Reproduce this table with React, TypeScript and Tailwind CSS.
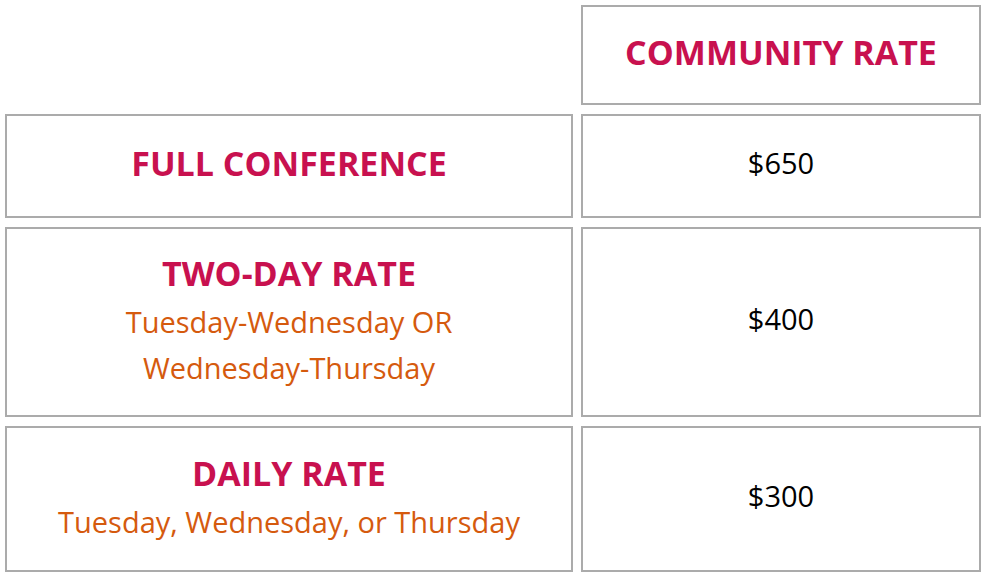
import React from "react";

const cell = "border-2 border-[#ababab] bg-white flex flex-col items-center justify-center text-center pb-[7px]";
const title = "font-bold text-[#c8114f] text-[34px] leading-[52px]";
const sub = "text-[#d55a0e] text-[29px] leading-[46px]";
const price = "text-black text-[29px] leading-[46px]";

export default function App() {
  return (
    <div
      className="w-[988px] h-[581px] bg-white p-[5px]"
      style={{ fontFamily: '"Open Sans", "Noto Sans", sans-serif' }}
    >
      <div className="grid grid-cols-[568px_400px] gap-x-[8px] gap-y-[9px]">
        <div className="h-[100px]" />
        <div className={`${cell} h-[100px]`}>
          <div className={title}>COMMUNITY RATE</div>
        </div>

        <div className={`${cell} h-[104px]`}>
          <div className={title}>FULL CONFERENCE</div>
        </div>
        <div className={`${cell} h-[104px]`}>
          <div className={price}>$650</div>
        </div>

        <div className={`${cell} h-[190px]`}>
          <div className={title}>TWO-DAY RATE</div>
          <div className={sub}>Tuesday-Wednesday OR</div>
          <div className={sub}>Wednesday-Thursday</div>
        </div>
        <div className={`${cell} h-[190px]`}>
          <div className={price}>$400</div>
        </div>

        <div className={`${cell} h-[146px]`}>
          <div className={title}>DAILY RATE</div>
          <div className={sub}>Tuesday, Wednesday, or Thursday</div>
        </div>
        <div className={`${cell} h-[146px]`}>
          <div className={price}>$300</div>
        </div>
      </div>
    </div>
  );
}
